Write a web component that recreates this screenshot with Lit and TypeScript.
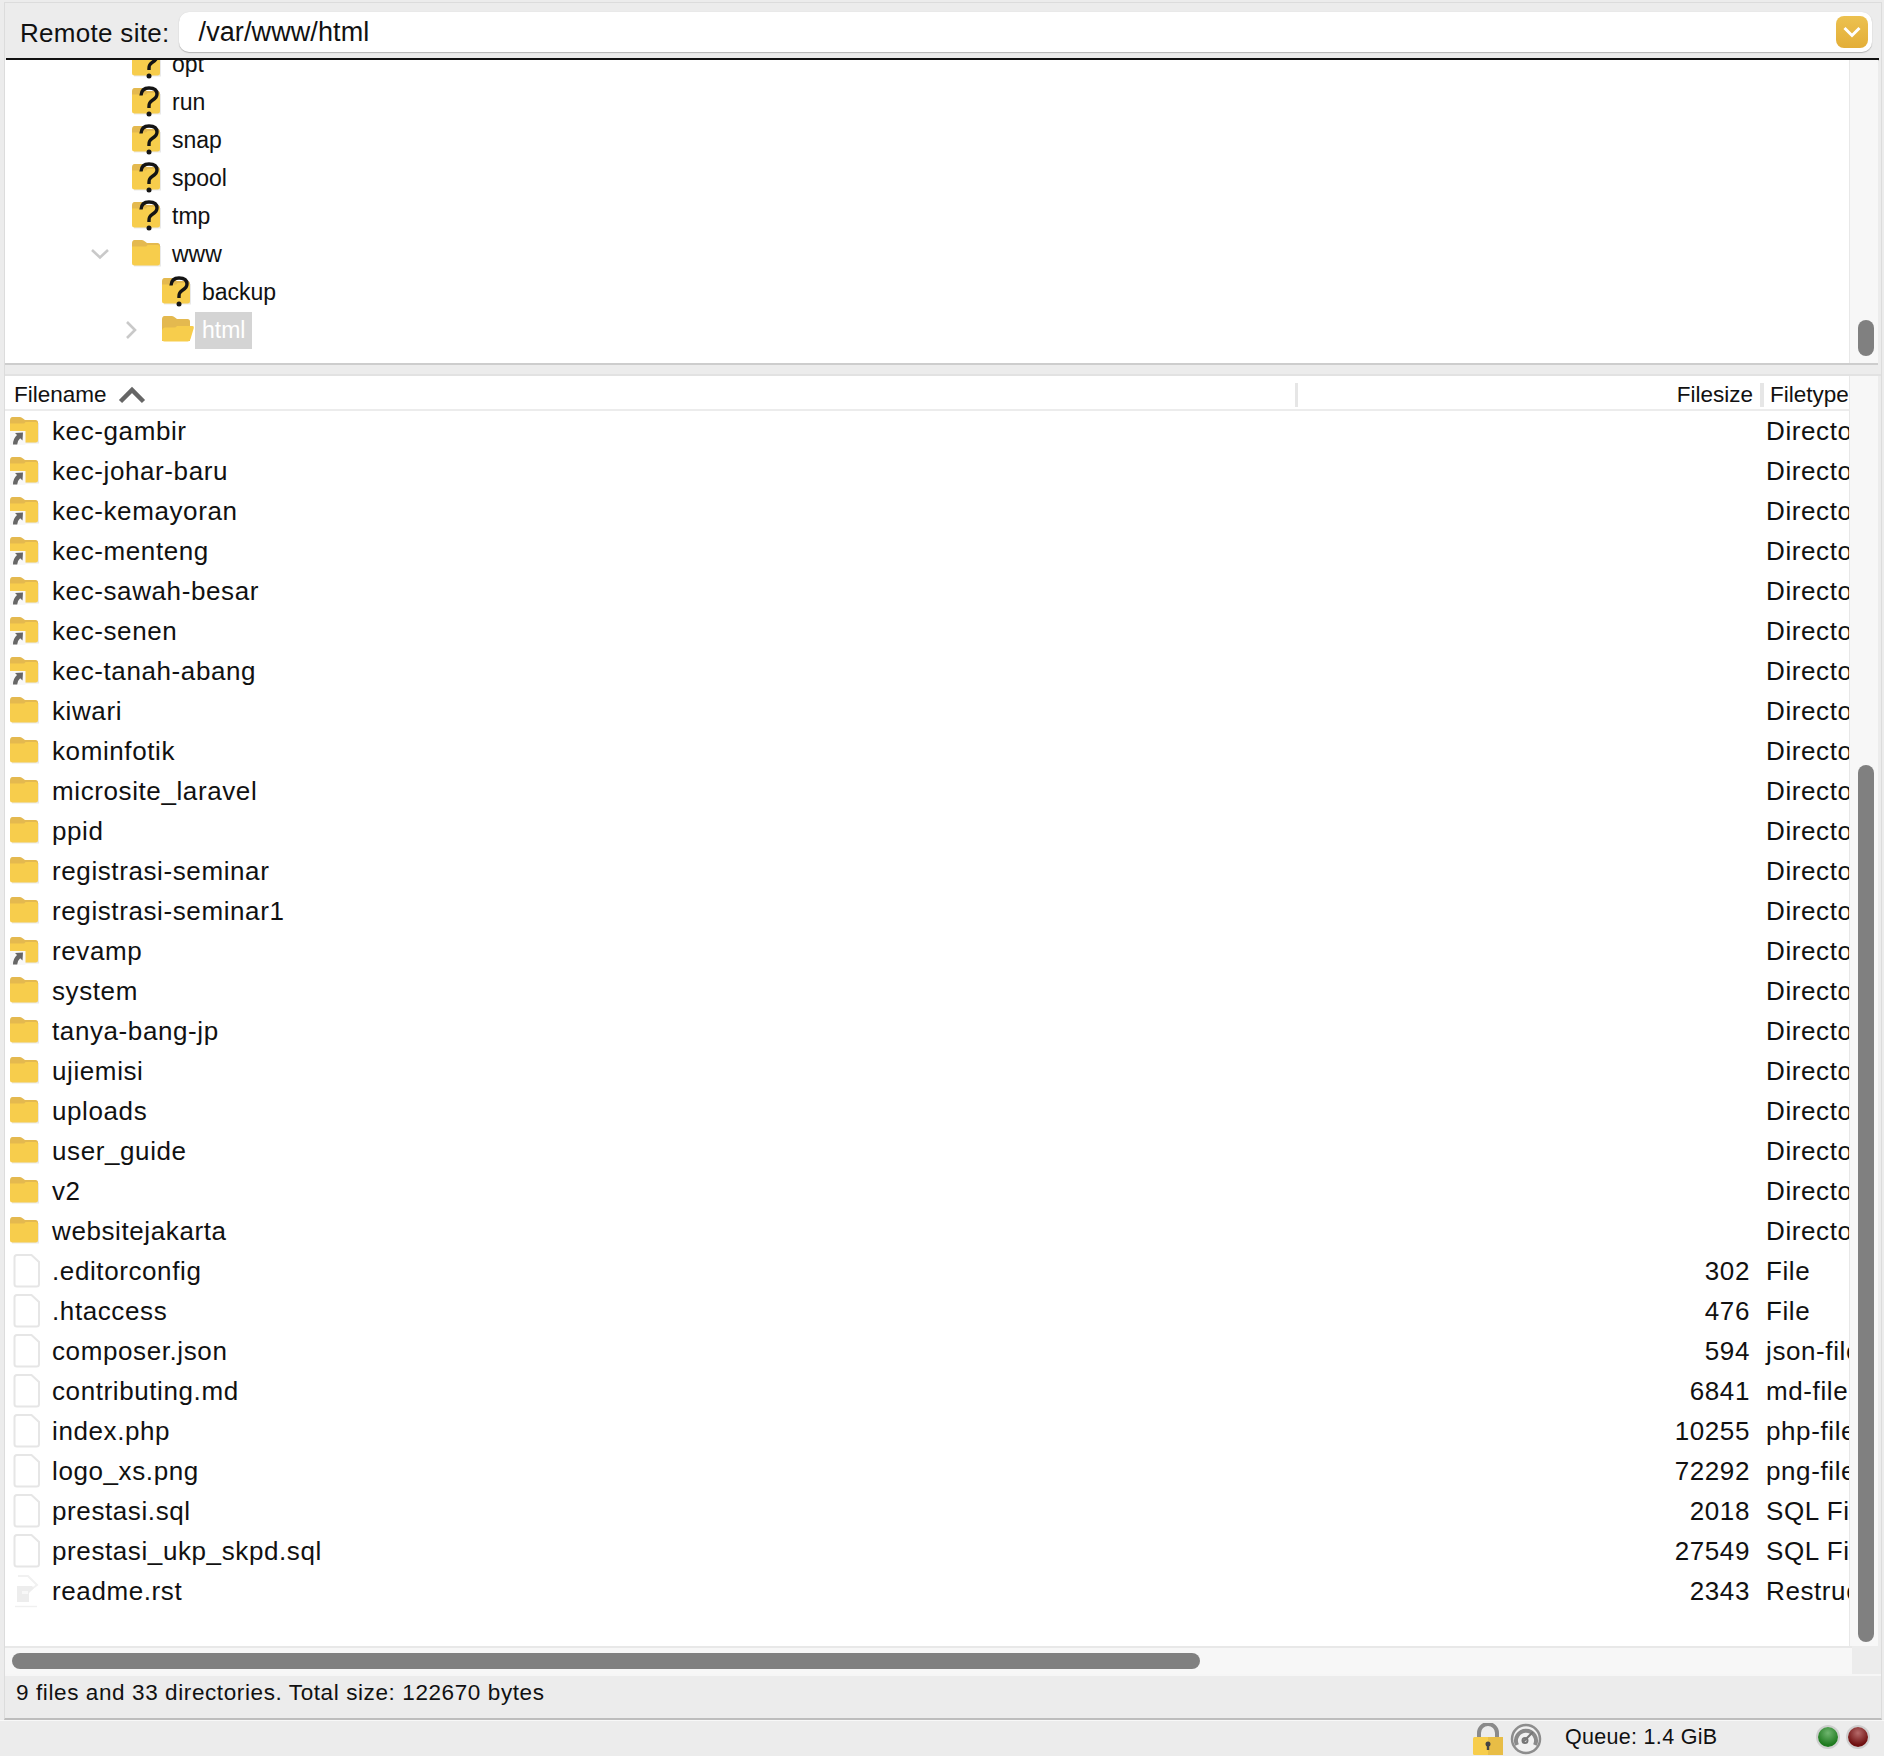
import { LitElement, html, css, svg } from "lit";
import { customElement } from "lit/decorators.js";

type Kind = "link" | "dir" | "file" | "rst";
const rows: [string, Kind, string, string][] = [
  ["kec-gambir", "link", "", "Directory"],
  ["kec-johar-baru", "link", "", "Directory"],
  ["kec-kemayoran", "link", "", "Directory"],
  ["kec-menteng", "link", "", "Directory"],
  ["kec-sawah-besar", "link", "", "Directory"],
  ["kec-senen", "link", "", "Directory"],
  ["kec-tanah-abang", "link", "", "Directory"],
  ["kiwari", "dir", "", "Directory"],
  ["kominfotik", "dir", "", "Directory"],
  ["microsite_laravel", "dir", "", "Directory"],
  ["ppid", "dir", "", "Directory"],
  ["registrasi-seminar", "dir", "", "Directory"],
  ["registrasi-seminar1", "dir", "", "Directory"],
  ["revamp", "link", "", "Directory"],
  ["system", "dir", "", "Directory"],
  ["tanya-bang-jp", "dir", "", "Directory"],
  ["ujiemisi", "dir", "", "Directory"],
  ["uploads", "dir", "", "Directory"],
  ["user_guide", "dir", "", "Directory"],
  ["v2", "dir", "", "Directory"],
  ["websitejakarta", "dir", "", "Directory"],
  [".editorconfig", "file", "302", "File"],
  [".htaccess", "file", "476", "File"],
  ["composer.json", "file", "594", "json-file"],
  ["contributing.md", "file", "6841", "md-file"],
  ["index.php", "file", "10255", "php-file"],
  ["logo_xs.png", "file", "72292", "png-file"],
  ["prestasi.sql", "file", "2018", "SQL File"],
  ["prestasi_ukp_skpd.sql", "file", "27549", "SQL File"],
  ["readme.rst", "rst", "2343", "Restructured"],
];

type TreeKind = "q" | "dir" | "open";
const tree: [string, TreeKind, number, string][] = [
  ["opt", "q", 0, ""],
  ["run", "q", 0, ""],
  ["snap", "q", 0, ""],
  ["spool", "q", 0, ""],
  ["tmp", "q", 0, ""],
  ["www", "dir", 0, "down"],
  ["backup", "q", 1, ""],
  ["html", "open", 1, "right"],
];

const folderBody = svg`
  <path d="M2 27.500h27V7H2z" fill="#e9e9e9"/>
  <path d="M0 4.500Q0 1 2.500 1h7.500q1.500 0 3 1.600L15 4h10.500Q28 4 28 6.500V10H0z" fill="#e4b94f"/>
  <path d="M0 7.500h13.500q1 0 2-1.500h10Q28 6 28 8.500V24q0 2.500-2.500 2.500h-23Q0 26.500 0 24z" fill="#f7cd4c"/>`;

function folder() {
  return html`<svg class="ico" width="32" height="30" viewBox="0 0 32 30">${folderBody}</svg>`;
}
function openFolder() {
  return html`<svg class="ico" width="32" height="30" viewBox="0 0 32 30">
    <path d="M0 4.500Q0 1 2.500 1h7.500q1.500 0 3 1.600L15 4h10.500Q28 4 28 6.500V26H0z" fill="#e4b94f"/>
    <path d="M0 16q0-3 3-3.500 L12 12.500q2 0 3-1.500h15.500q1.800 0 1.300 2L28.500 24q-.7 2.500-3 2.500h-23Q0 26.500 0 24z" fill="#f7cd4c"/>
  </svg>`;
}
function question() {
  return html`<svg class="ico" width="32" height="30" viewBox="0 0 32 30">
    ${folderBody}
    <path d="M9 8.500Q9.500 1 17 1q8 0 8 6 0 3.500-4.500 6.200-3.500 2.300-3.500 6V21" fill="none" stroke="#141414" stroke-width="3.400"/>
    <circle cx="17" cy="27" r="2.500" fill="#141414"/>
  </svg>`;
}
function link() {
  return html`<svg class="ico" width="32" height="30" viewBox="0 0 32 30">
    ${folderBody}
    <path d="M0 15h15.500v14H0z" fill="#f8f8f8"/>
    <path d="M3 28.500q0-6 4-9.500l-2-2 8-.5-.5 8-2.300-2.300q-2.500 2-3 6.300z" fill="#666"/>
  </svg>`;
}
function fileIco() {
  return html`<svg class="ico" width="32" height="34" viewBox="0 0 32 34">
    <path d="M7 1h14.500l7.500 7v22q0 2.500-2.500 2.500H7Q4.500 32.500 4.500 30V3.500Q4.500 1 7 1z" fill="#fff" stroke="#e6e6e6" stroke-width="2"/>
  </svg>`;
}
function rstIco() {
  return html`<svg class="ico" width="32" height="34" viewBox="0 0 32 34">
    <path d="M5 32.500h22" stroke="#f0f0f0" stroke-width="1.500"/>
    <path d="M8 2h10l9 9-8 6" fill="none" stroke="#f1f1f1" stroke-width="2"/>
    <path d="M7 12h15l2 2-5 5v9H7z" fill="#ededed"/>
    <path d="M12 17h6v3h-6z" fill="#f8f8f8"/>
  </svg>`;
}
const rowIcon = (k: Kind) =>
  k === "link" ? link() : k === "dir" ? folder() : k === "file" ? fileIco() : rstIco();
const treeIcon = (k: TreeKind) => (k === "q" ? question() : k === "dir" ? folder() : openFolder());

function expander(dir: string) {
  if (dir === "down")
    return html`<svg class="exp" width="20" height="12" viewBox="0 0 20 12"><path d="M2 2l8 7.500L18 2" fill="none" stroke="#c9c9c9" stroke-width="2.600"/></svg>`;
  if (dir === "right")
    return html`<svg class="exp right" width="12" height="20" viewBox="0 0 12 20"><path d="M2 2l8 8-8 8" fill="none" stroke="#c9c9c9" stroke-width="2.600"/></svg>`;
  return "";
}

@customElement("app-root")
export class AppRoot extends LitElement {
  static styles = css`
    :host {
      display: flex;
      flex-direction: column;
      width: 1884px;
      height: 1756px;
      background: #ececec;
      font-family: "Liberation Sans", Arial, sans-serif;
      color: #111;
      overflow: hidden;
    }
    .frame {
      flex: none;
      height: 1718px;
      margin: 2px 0 0 4px;
      width: 1878px;
      box-sizing: border-box;
      display: flex;
      flex-direction: column;
      border-top: 1px solid #dcdcdc;
      border-left: 1px solid #dcdcdc;
      border-right: 1px solid #dcdcdc;
      border-bottom: 2px solid #bdbdbd;
    }
    .site {
      flex: none;
      height: 55px;
      display: flex;
      align-items: center;
      padding: 0 9px 0 15px;
      box-sizing: border-box;
      font-size: 26px;
      letter-spacing: 0.300px;
      gap: 9px;
    }
    .label { padding-top: 6px; }
    .input {
      flex: 1;
      height: 40px;
      margin-top: 3px;
      background: #fff;
      border-radius: 10px;
      box-shadow: 0 1px 1px #b5b5b5, 0 0 1px #cfcfcf;
      display: flex;
      align-items: center;
      padding: 0 4px 0 20px;
      font-size: 27px;
      letter-spacing: 0.100px;
    }
    .path { flex: 1; padding-top: 1px; }
    .drop {
      width: 32px;
      height: 32px;
      border-radius: 8px;
      background: linear-gradient(#ecc14f, #e3ae38);
      display: flex;
      align-items: center;
      justify-content: center;
    }
    .rule { flex: none; height: 2px; background: #111; margin: 0 2px 0 1px; box-shadow: 0 1px 0 #ccc; }
    .tree-panel {
      flex: none;
      height: 305px;
      display: flex;
      background: #fff;
      border-bottom: 2px solid #cdcdcd;
      box-sizing: border-box;
      margin-right: 3px;
    }
    .tree {
      flex: 1;
      display: flex;
      flex-direction: column;
      justify-content: flex-end;
      overflow: hidden;
      padding-bottom: 14px;
      border-right: 1px solid #e8e8e8;
    }
    .trow {
      flex: none;
      height: 38px;
      display: flex;
      align-items: center;
      font-size: 23px;
    }
    .trow .ico { flex: none; overflow: visible; }
    .slot {
      flex: none;
      width: 32px;
      height: 30px;
      margin-right: 8px;
      display: flex;
      align-items: center;
    }
    .indent { flex: none; }
    .exp-slot {
      flex: none;
      width: 42px;
      padding-left: 10px;
      display: flex;
      align-items: center;
    }
    .exp.right { margin-left: 5px; }
    .tname { padding: 0 7px; height: 38px; display: flex; align-items: center; margin-left: -7px; }
    .tname.sel { background: #d4d4d4; color: #fff; height: 37px; }
    .gutter {
      flex: none;
      width: 28px;
      background: #f7f7f7;
      position: relative;
    }
    .thumb-v {
      position: absolute;
      left: 8px;
      width: 16px;
      background: #808080;
      border-radius: 8px;
    }
    .gap { flex: none; height: 11px; border-bottom: 2px solid #e2e2e2; box-sizing: border-box; }
    .list-panel { flex: 1; min-height: 0; display: flex; margin-right: 3px; }
    .list { flex: 1; min-width: 0; background: #fff; border-right: 1px solid #e8e8e8; overflow: hidden; }
    .head {
      height: 28px;
      padding-top: 5px;
      display: grid;
      grid-template-columns: 1fr 465px 89px;
      align-items: center;
      border-bottom: 2px solid #ececec;
      font-size: 22.500px;
    }
    .hname {
      display: flex;
      align-items: center;
      gap: 11px;
      padding-left: 9px;
      height: 24px;
    }
    .hsize {
      height: 24px;
      border-left: 3px solid #e6e6e6;
      display: flex;
      align-items: center;
      justify-content: flex-end;
      padding-right: 7px;
    }
    .htype {
      height: 24px;
      border-left: 4px solid #e6e6e6;
      display: flex;
      align-items: center;
      padding-left: 6px;
      white-space: nowrap;
      overflow: hidden;
    }
    .row {
      height: 40px;
      display: grid;
      grid-template-columns: 47px 1fr 130px 99px;
      align-items: center;
      font-size: 26px;
      letter-spacing: 0.600px;
    }
    .row .iw { padding-left: 5px; display: flex; align-items: center; }
    .row .size { text-align: right; }
    .row .type { white-space: nowrap; overflow: hidden; padding-left: 16px; }
    .hbar { flex: none; height: 28px; display: flex; align-items: center; padding-left: 7px; background: #f7f7f7; border-top: 2px solid #e8e8e8; box-sizing: border-box; margin-right: 29px; }
    .thumb-h { width: 1188px; height: 16px; border-radius: 8px; background: #808080; }
    .status {
      flex: none;
      height: 44px;
      border-top: 2px solid #f6f6f6;
      box-sizing: border-box;
      display: flex;
      align-items: center;
      padding: 0 0 9px 11px;
      font-size: 22.500px;
      letter-spacing: 0.600px;
    }
    .bottom {
      flex: 1;
      display: flex;
      align-items: center;
      font-size: 21.500px;
      padding: 0 0 3px 1472px;
      border-top: 1px solid #f8f8f8;
    }
    .queue { margin-left: 23px; width: 253px; letter-spacing: 0.300px; }
    .bottom svg { flex: none; margin-bottom: -3px; }
    .gauge { margin-left: 6px; }
    .led { width: 20px; height: 20px; border-radius: 50%; box-shadow: 0 0 0 2px #cfcfcf; }
    .led.g { background: radial-gradient(circle at 50% 30%, #6fb56f, #1f7a1f 70%); }
    .led.r { background: radial-gradient(circle at 50% 30%, #b56a6a, #6f0f0f 70%); margin-left: 10px; }
  `;

  render() {
    return html`
      <div class="frame">
        <div class="site">
          <span class="label">Remote site:</span>
          <div class="input">
            <span class="path">/var/www/html</span>
            <div class="drop">
              <svg width="20" height="12" viewBox="0 0 20 12"><path d="M2.500 2l7.500 7.500L17.500 2" fill="none" stroke="#fff" stroke-width="3"/></svg>
            </div>
          </div>
        </div>
        <div class="rule"></div>
        <div class="tree-panel">
          <div class="tree">
            ${tree.map(
              ([name, kind, depth, dir]) => html`
                <div class="trow">
                  <span class="indent" style="width:${75 + depth * 30}px"></span>
                  <span class="exp-slot">${expander(dir)}</span>
                  <span class="slot">${treeIcon(kind)}</span>
                  <span class="tname ${kind === "open" ? "sel" : ""}">${name}</span>
                </div>`
            )}
          </div>
          <div class="gutter"><div class="thumb-v" style="top:260px;height:36px"></div></div>
        </div>
        <div class="gap"></div>
        <div class="list-panel">
          <div class="list">
            <div class="head">
              <div class="hname">
                <span>Filename</span>
                <svg width="28" height="20" viewBox="0 0 28 20"><path d="M2.500 16.500L14 5l11.500 11.500" fill="none" stroke="#666" stroke-width="4.500"/></svg>
              </div>
              <div class="hsize">Filesize</div>
              <div class="htype">Filetype</div>
            </div>
            ${rows.map(
              ([n, k, s, t]) => html`
                <div class="row">
                  <span class="iw">${rowIcon(k)}</span>
                  <span>${n}</span>
                  <span class="size">${s}</span>
                  <span class="type">${t}</span>
                </div>`
            )}
          </div>
          <div class="gutter"><div class="thumb-v" style="top:389px;height:877px"></div></div>
        </div>
        <div class="hbar"><div class="thumb-h"></div></div>
        <div class="status">9 files and 33 directories. Total size: 122670 bytes</div>
      </div>
      <div class="bottom">
        <svg width="32" height="32" viewBox="0 0 32 32">
          <path d="M7 16V10a9 9 0 0 1 18 0v6" fill="none" stroke="#8a8a8a" stroke-width="4"/>
          <rect x="1" y="14" width="30" height="18" rx="1.500" fill="#f7cd4c"/>
          <path d="M16 14h15v18H16z" fill="#e8bd46"/>
          <circle cx="16" cy="21" r="2.500" fill="#444"/><path d="M14.800 21h2.400v6h-2.400z" fill="#444"/>
        </svg>
        <svg class="gauge" width="32" height="32" viewBox="0 0 32 32">
          <circle cx="16" cy="16" r="14" fill="#f1f1f1" stroke="#8d8d8d" stroke-width="2.500"/>
          <path d="M7 22a10 10 0 1 1 18 0" fill="none" stroke="#8a8a8a" stroke-width="4"/>
          <path d="M13 19L23 9" stroke="#777" stroke-width="2"/><circle cx="15" cy="17.500" r="2.500" fill="none" stroke="#777" stroke-width="2"/>
        </svg>
        <span class="queue">Queue: 1.4 GiB</span>
        <span class="led g"></span>
        <span class="led r"></span>
      </div>
    `;
  }
}
